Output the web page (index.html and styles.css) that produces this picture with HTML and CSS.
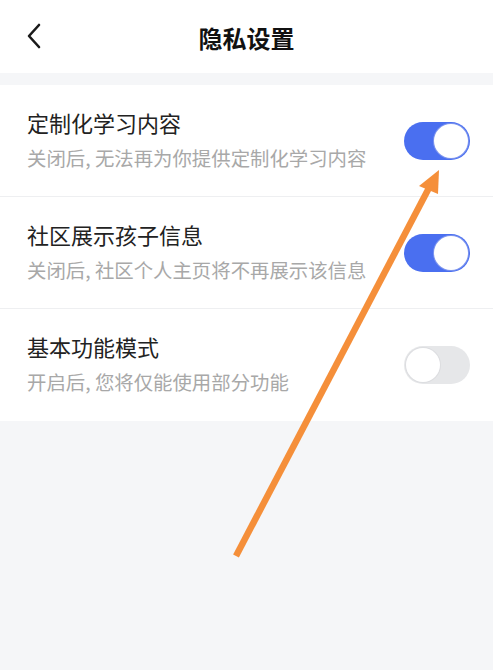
FILE: index.html
```html
<!DOCTYPE html>
<html lang="zh-CN">
<head>
    <meta charset="UTF-8">
    <meta name="viewport" content="width=device-width, initial-scale=1.0">
    <title>隐私设置</title>
    <link rel="stylesheet" href="styles.css">
</head>
<body>
    <div class="page">
        <header class="nav">
            <span class="nav-back">
                <svg width="18" height="28" viewBox="0 0 18 28">
                    <path d="M15 3 L5 14 L15 25" fill="none" stroke="#1a1a1a" stroke-width="2.6" stroke-linecap="round" stroke-linejoin="round"/>
                </svg>
            </span>
            <h1 class="nav-title">隐私设置</h1>
        </header>

        <div class="settings">
            <div class="setting-row">
                <div class="setting-text">
                    <div class="setting-title">定制化学习内容</div>
                    <div class="setting-desc">关闭后, 无法再为你提供定制化学习内容</div>
                </div>
                <span class="switch on"><span class="switch-knob"></span></span>
            </div>
            <div class="setting-row">
                <div class="setting-text">
                    <div class="setting-title">社区展示孩子信息</div>
                    <div class="setting-desc">关闭后, 社区个人主页将不再展示该信息</div>
                </div>
                <span class="switch on"><span class="switch-knob"></span></span>
            </div>
            <div class="setting-row">
                <div class="setting-text">
                    <div class="setting-title">基本功能模式</div>
                    <div class="setting-desc">开启后, 您将仅能使用部分功能</div>
                </div>
                <span class="switch"><span class="switch-knob"></span></span>
            </div>
        </div>

        <!-- annotation arrow drawn over the screenshot -->
        <svg class="annotation" width="493" height="670" viewBox="0 0 493 670">
            <line x1="236" y1="556" x2="430" y2="186" stroke="#f58f3a" stroke-width="6.5" stroke-linecap="butt"/>
            <polygon points="439,170 419,186 438,194" fill="#f58f3a"/>
        </svg>
    </div>
</body>
</html>
```

FILE: styles.css
```css
body {
    margin: 0;
    padding: 0;
    background-color: #f5f6f8;
    font-family: "Noto Sans CJK SC", "Noto Sans", sans-serif;
}

.page {
    position: relative;
    width: 493px;
    height: 670px;
    overflow: hidden;
}

.nav {
    position: relative;
    height: 73px;
    background-color: #fff;
    display: flex;
    align-items: center;
    justify-content: center;
    margin-bottom: 12px;
}

.nav-back {
    position: absolute;
    left: 24px;
    top: 22px;
    display: flex;
}

.nav-title {
    margin: 0;
    font-size: 24px;
    font-weight: 700;
    color: #111;
    line-height: 1;
    margin-top: 2px;
}

.settings {
    background-color: #fff;
}

.setting-row {
    height: 112px;
    box-sizing: border-box;
    padding: 0 23px 0 27px;
    display: flex;
    align-items: center;
    justify-content: space-between;
    border-bottom: 1px solid #eeeff1;
}

.setting-row:last-child {
    border-bottom: none;
}

.setting-title {
    font-size: 22px;
    color: #222;
    line-height: 28px;
    margin-top: -3px;
}

.setting-desc {
    font-size: 19.4px;
    color: #a8a8a8;
    line-height: 26px;
    margin-top: 9px;
}

/* toggle switch */
.switch {
    position: relative;
    width: 66px;
    height: 38px;
    border-radius: 19px;
    background-color: #e6e7e9;
    flex-shrink: 0;
}

.switch-knob {
    position: absolute;
    top: 2px;
    left: 2px;
    width: 34px;
    height: 34px;
    border-radius: 50%;
    background-color: #fff;
    box-shadow: 0 0 0 1px #dcdde0;
}

.switch.on {
    background-color: #4a6ff0;
}

.switch.on .switch-knob {
    left: 30px;
    box-shadow: 0 0 0 1px #7d95ee;
}

.annotation {
    position: absolute;
    left: 0;
    top: 0;
    pointer-events: none;
}
```
